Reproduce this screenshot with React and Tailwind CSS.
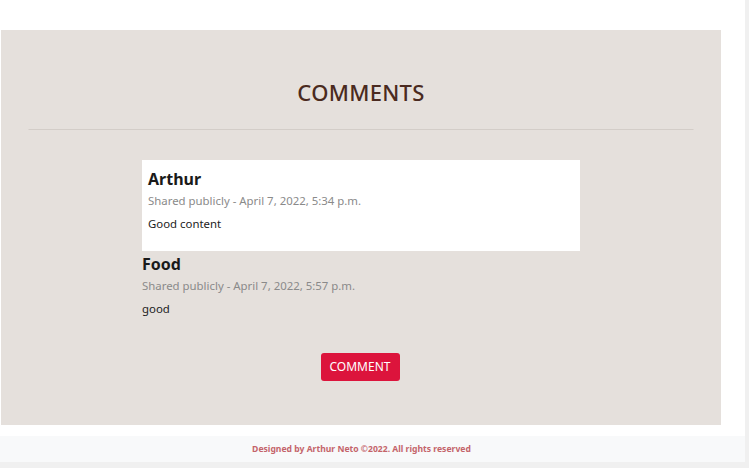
export default function App() {
  const font = { fontFamily: '"Noto Sans", "Open Sans", sans-serif' };
  return (
    <div className="w-[749px] h-[468px] bg-white flex overflow-hidden" style={font}>
      <div className="w-[745px] flex flex-col">
        <div className="h-[30px] shrink-0" />
        <section className="ml-[1px] w-[720px] h-[395px] shrink-0 bg-[#e5e0dc] flex flex-col items-center">
          <h2 className="mt-[48px] text-[22px] font-medium leading-[28px] text-[#4a2a20] tracking-[0.3px]">COMMENTS</h2>
          <div className="mt-[23px] w-[665px] h-[1px] bg-[#d3cdc8] -translate-x-[0.5px]" />
          <div className="mt-[30px] w-[438px] flex flex-col">
            <div className="bg-white h-[91px] px-[6px] pt-[7px]">
              <div className="text-[16px] font-bold leading-[24px] text-[#1a1a1a]">Arthur</div>
              <div className="mt-[2px] text-[11.4px] leading-[16px] text-[#8a8a8a]">Shared publicly - April 7, 2022, 5:34 p.m.</div>
              <div className="mt-[7px] text-[11.4px] leading-[16px] text-[#222]">Good content</div>
            </div>
            <div className="pt-[1px]">
              <div className="text-[16px] font-bold leading-[24px] text-[#1a1a1a]">Food</div>
              <div className="mt-[2px] text-[11.4px] leading-[16px] text-[#8a8a8a]">Shared publicly - April 7, 2022, 5:57 p.m.</div>
              <div className="mt-[7px] text-[11.4px] leading-[16px] text-[#222]">good</div>
            </div>
          </div>
          <button className="mt-[36px] w-[79px] h-[28px] rounded-[3px] bg-[#dc143c] text-white text-[12px] leading-[28px] -translate-x-[1px]">COMMENT</button>
        </section>
        <div className="h-[11px] shrink-0" />
        <footer className="h-[26px] shrink-0 bg-[#f8f9fa] flex items-center justify-center">
          <span className="text-[8.6px] font-bold text-[#c4646a] translate-x-[-11px]">Designed by Arthur Neto ©2022. All rights reserved</span>
        </footer>
        <div className="flex-1 bg-[#f0f0f0]" />
      </div>
      <div className="w-[4px] bg-[#f0f0f0]" />
    </div>
  );
}
